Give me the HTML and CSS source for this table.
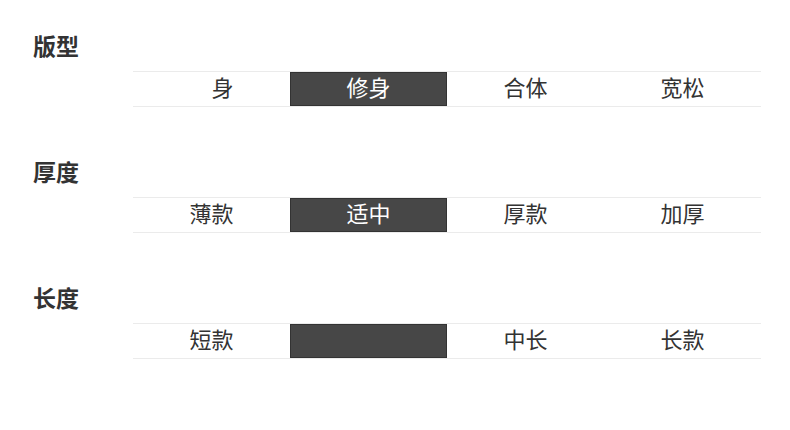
FILE: index.html
```html
<!DOCTYPE html>
<html lang="zh">
<head>
<meta charset="utf-8">
<link rel="stylesheet" href="styles.css">
</head>
<body>
<div class="page">
  <section class="group">
    <h2 class="title">版型</h2>
    <div class="options">
      <div class="opt">　身</div>
      <div class="opt active">修身</div>
      <div class="opt">合体</div>
      <div class="opt">宽松</div>
    </div>
  </section>
  <section class="group">
    <h2 class="title">厚度</h2>
    <div class="options">
      <div class="opt">薄款</div>
      <div class="opt active">适中</div>
      <div class="opt">厚款</div>
      <div class="opt">加厚</div>
    </div>
  </section>
  <section class="group">
    <h2 class="title">长度</h2>
    <div class="options">
      <div class="opt">短款</div>
      <div class="opt active"></div>
      <div class="opt">中长</div>
      <div class="opt">长款</div>
    </div>
  </section>
</div>
</body>
</html>
```
FILE: styles.css
```css
* { box-sizing: border-box; }
html, body { margin: 0; padding: 0; background: #fff; }
body {
  font-family: "Noto Sans CJK SC", "Noto Sans", sans-serif;
  color: #333;
}
.page {
  padding: 31px 29px 0 33px;
  display: flex;
  flex-direction: column;
  gap: 50px;
}
.group {
  display: flex;
  flex-direction: column;
  gap: 12px;
}
.title {
  margin: 0;
  font-size: 23px;
  line-height: 28px;
  font-weight: 700;
  color: #333;
}
.options {
  margin-left: 100px;
  display: grid;
  grid-template-columns: repeat(4, 157px);
  border-top: 1px solid #ebebeb;
  border-bottom: 1px solid #ebebeb;
  height: 36px;
}
.opt {
  height: 34px;
  display: flex;
  align-items: center;
  justify-content: center;
  padding-bottom: 6px;
  font-size: 22px;
  line-height: 28px;
  color: #333;
}
.opt.active {
  background: #474747;
  border: 1px solid #333;
  color: #fff;
}
```
